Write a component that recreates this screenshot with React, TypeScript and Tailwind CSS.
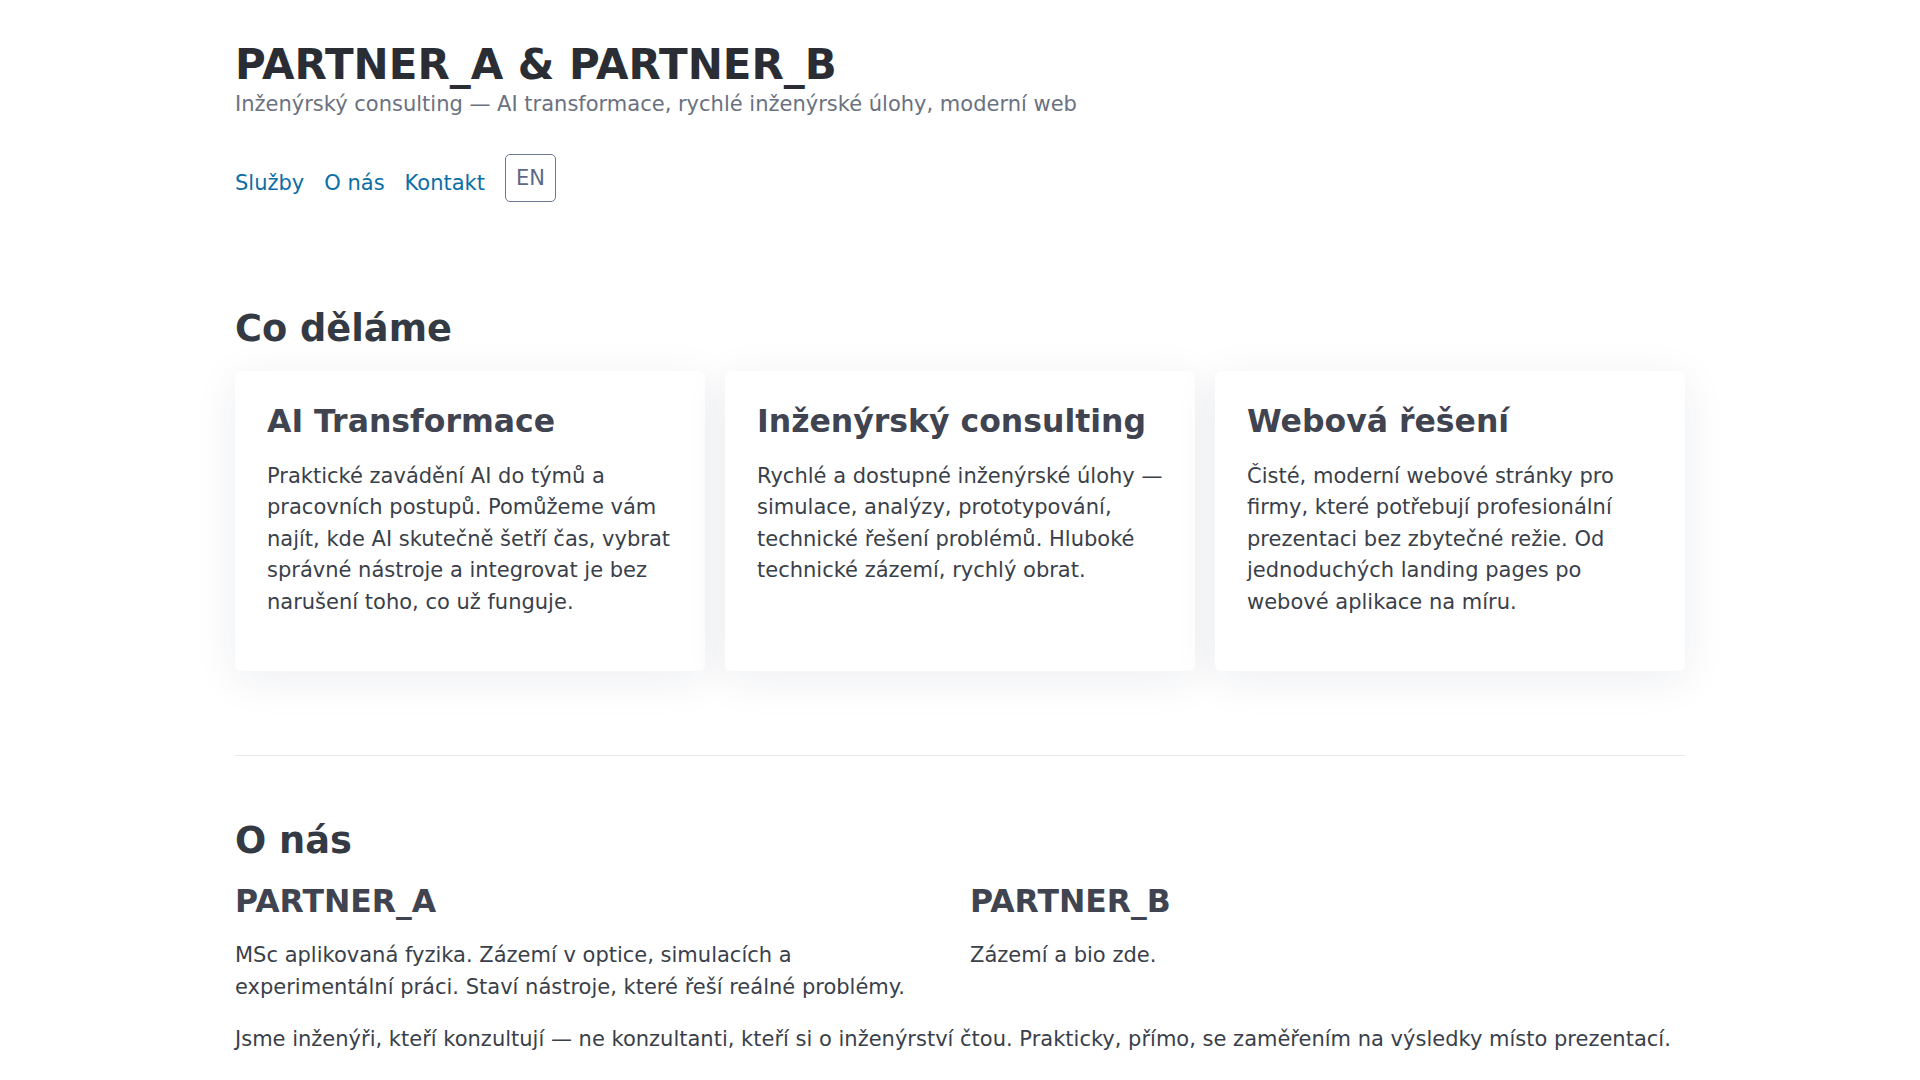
import React from "react";

const services = [
  {
    title: "AI Transformace",
    text: "Praktické zavádění AI do týmů a pracovních postupů. Pomůžeme vám najít, kde AI skutečně šetří čas, vybrat správné nástroje a integrovat je bez narušení toho, co už funguje.",
  },
  {
    title: "Inženýrský consulting",
    text: "Rychlé a dostupné inženýrské úlohy — simulace, analýzy, prototypování, technické řešení problémů. Hluboké technické zázemí, rychlý obrat.",
  },
  {
    title: "Webová řešení",
    text: "Čisté, moderní webové stránky pro firmy, které potřebují profesionální prezentaci bez zbytečné režie. Od jednoduchých landing pages po webové aplikace na míru.",
  },
];

export default function App() {
  return (
    <div className="min-h-screen bg-white font-['DejaVu_Sans',sans-serif]">
      <div className="mx-auto max-w-[1450px] pt-[41px] pb-10">
        <header>
          <h1 className="text-[42px] leading-[1.15] font-bold text-[#2a2e34]">
            PARTNER_A &amp; PARTNER_B
          </h1>
          <p className="text-[21px] leading-[1.5] text-[#6b7180]">
            Inženýrský consulting — AI transformace, rychlé inženýrské úlohy, moderní web
          </p>
          <nav className="mt-[33px] flex items-center gap-5 text-[21px] leading-[1.5]">
            <a className="pt-[11px] text-[#0b6ea6]" href="#sluzby">Služby</a>
            <a className="pt-[11px] text-[#0b6ea6]" href="#onas">O nás</a>
            <a className="pt-[11px] text-[#0b6ea6]" href="#kontakt">Kontakt</a>
            <button className="rounded-[5px] border border-[#6b7894] bg-white px-[10px] pt-[8.5px] pb-[6px] text-[21px] leading-[1.5] text-[#5b6987]">
              EN
            </button>
          </nav>
        </header>

        <section id="sluzby" className="mt-[105px]">
          <h2 className="mb-[20px] text-[36.75px] leading-[1.2] font-bold text-[#343a44]">
            Co děláme
          </h2>
          <div className="grid grid-cols-3 gap-5">
            {services.map((s) => (
              <div
                key={s.title}
                className="rounded-md bg-white px-8 pt-8 pb-[33px] shadow-[0_8px_44px_rgba(30,41,80,0.08)]"
              >
                <h3 className="mb-5 text-[31.5px] leading-[1.2] font-bold text-[#3f4450]">
                  {s.title}
                </h3>
                <p className="mb-5 text-[21px] leading-[1.5] text-[#3a3f4a]">{s.text}</p>
              </div>
            ))}
          </div>
        </section>

        <hr className="mt-[84px] border-0 border-t border-[#e8eaee]" />

        <section id="onas" className="mt-[63px]">
          <h2 className="mb-[20px] text-[36.75px] leading-[1.2] font-bold text-[#343a44]">
            O nás
          </h2>
          <div className="grid grid-cols-2 gap-5">
            <div>
              <h3 className="mb-[19px] text-[31.5px] leading-[1.2] font-bold text-[#3f4450]">
                PARTNER_A
              </h3>
              <p className="text-[21px] leading-[1.5] text-[#3a3f4a]">
                MSc aplikovaná fyzika. Zázemí v optice, simulacích a experimentální práci. Staví nástroje, které řeší reálné problémy.
              </p>
            </div>
            <div>
              <h3 className="mb-[19px] text-[31.5px] leading-[1.2] font-bold text-[#3f4450]">
                PARTNER_B
              </h3>
              <p className="text-[21px] leading-[1.5] text-[#3a3f4a]">Zázemí a bio zde.</p>
            </div>
          </div>
          <p className="mt-[21px] text-[21px] leading-[1.5] text-[#3a3f4a]">
            Jsme inženýři, kteří konzultují — ne konzultanti, kteří si o inženýrství čtou. Prakticky, přímo, se zaměřením na výsledky místo prezentací.
          </p>
        </section>
      </div>
    </div>
  );
}
